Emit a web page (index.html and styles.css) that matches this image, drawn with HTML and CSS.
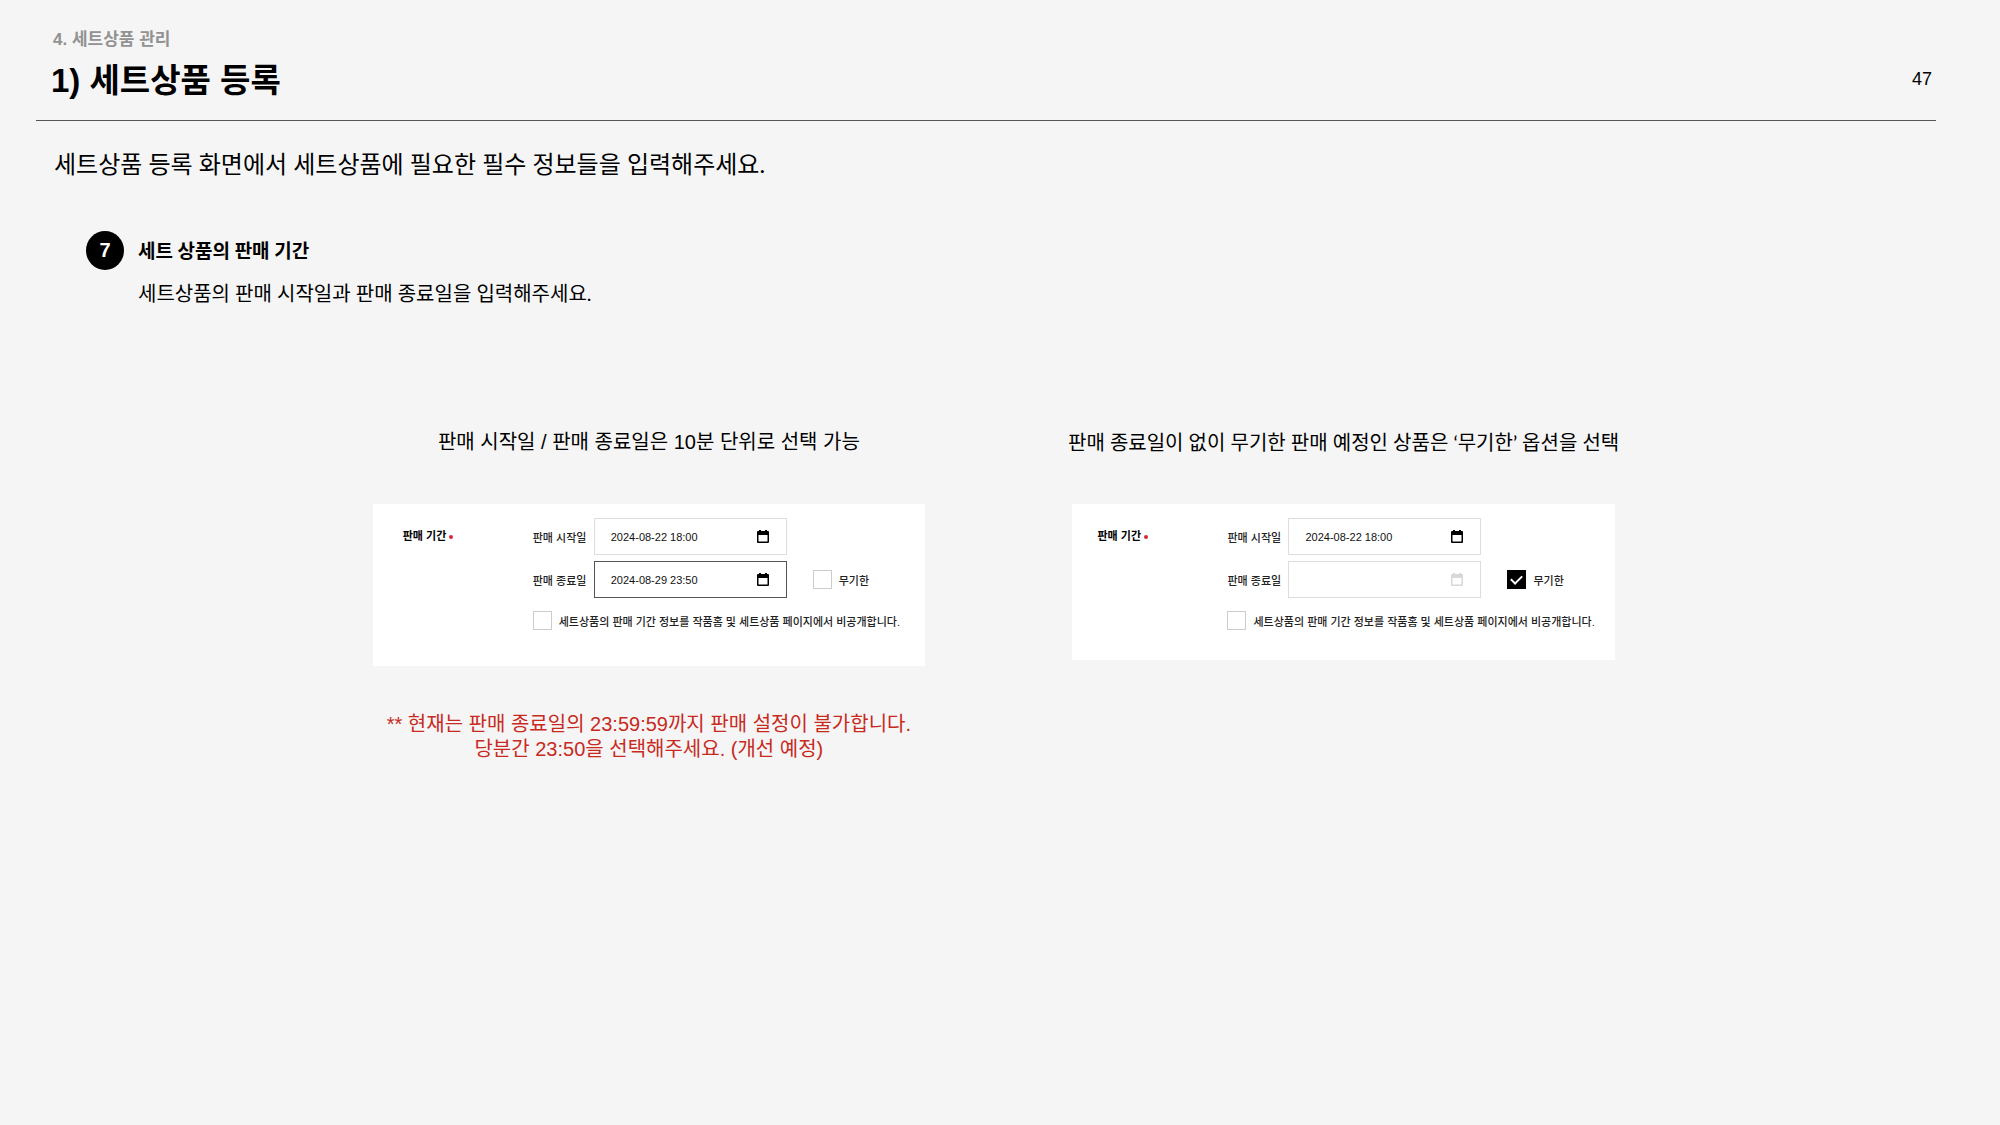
FILE: index.html
```html
<!DOCTYPE html>
<html lang="ko">
<head>
    <meta charset="UTF-8">
    <meta name="viewport" content="width=device-width, initial-scale=1.0">
    <title>세트상품 등록</title>
    <link rel="stylesheet" href="styles.css">
</head>
<body>
    <header class="header">
        <div>
            <p class="chapter">4. 세트상품 관리</p>
            <h1>1) 세트상품 등록</h1>
        </div>
        <span class="page-number">47</span>
    </header>

    <main>
        <p class="intro">세트상품 등록 화면에서 세트상품에 필요한 필수 정보들을 입력해주세요.</p>

        <section class="step">
            <span class="step-number">7</span>
            <h2>세트 상품의 판매 기간</h2>
            <p class="step-text">세트상품의 판매 시작일과 판매 종료일을 입력해주세요.</p>
        </section>

        <div class="examples">
            <section class="example">
                <p class="caption">판매 시작일 / 판매 종료일은 10분 단위로 선택 가능</p>
                <form class="card">
                    <h3>판매 기간 <span class="required"></span></h3>
                    <div class="fields">
                        <div class="row">
                            <label for="start1">판매 시작일</label>
                            <div class="date">
                                <input type="text" id="start1" value="2024-08-22 18:00">
                                <button type="button" aria-label="날짜 선택">
                                    <svg viewBox="0 0 12 13"><path fill-rule="evenodd" d="M2 0h2v1h4V0h2v1h1q1 0 1 1v10q0 1-1 1H1q-1 0-1-1V2q0-1 1-1h1zM1.500 5v6.500h9V5z"/></svg>
                                </button>
                            </div>
                        </div>
                        <div class="row">
                            <label for="end1">판매 종료일</label>
                            <div class="date active">
                                <input type="text" id="end1" value="2024-08-29 23:50">
                                <button type="button" aria-label="날짜 선택">
                                    <svg viewBox="0 0 12 13"><path fill-rule="evenodd" d="M2 0h2v1h4V0h2v1h1q1 0 1 1v10q0 1-1 1H1q-1 0-1-1V2q0-1 1-1h1zM1.500 5v6.500h9V5z"/></svg>
                                </button>
                            </div>
                            <label class="check no-end"><input type="checkbox"> 무기한</label>
                        </div>
                        <label class="check"><input type="checkbox"> 세트상품의 판매 기간 정보를 작품홈 및 세트상품 페이지에서 비공개합니다.</label>
                    </div>
                </form>
                <p class="notice">** 현재는 판매 종료일의 23:59:59까지 판매 설정이 불가합니다.<br>당분간 23:50을 선택해주세요. (개선 예정)</p>
            </section>

            <section class="example">
                <p class="caption plain">판매 종료일이 없이 무기한 판매 예정인 상품은 ‘무기한’ 옵션을 선택</p>
                <form class="card small">
                    <h3>판매 기간 <span class="required"></span></h3>
                    <div class="fields">
                        <div class="row">
                            <label for="start2">판매 시작일</label>
                            <div class="date">
                                <input type="text" id="start2" value="2024-08-22 18:00">
                                <button type="button" aria-label="날짜 선택">
                                    <svg viewBox="0 0 12 13"><path fill-rule="evenodd" d="M2 0h2v1h4V0h2v1h1q1 0 1 1v10q0 1-1 1H1q-1 0-1-1V2q0-1 1-1h1zM1.500 5v6.500h9V5z"/></svg>
                                </button>
                            </div>
                        </div>
                        <div class="row">
                            <label for="end2">판매 종료일</label>
                            <div class="date">
                                <input type="text" id="end2" disabled>
                                <button type="button" aria-label="날짜 선택" disabled>
                                    <svg viewBox="0 0 12 13"><path fill-rule="evenodd" d="M2 0h2v1h4V0h2v1h1q1 0 1 1v10q0 1-1 1H1q-1 0-1-1V2q0-1 1-1h1zM1.500 5v6.500h9V5z"/></svg>
                                </button>
                            </div>
                            <label class="check no-end"><input type="checkbox" checked> 무기한</label>
                        </div>
                        <label class="check"><input type="checkbox"> 세트상품의 판매 기간 정보를 작품홈 및 세트상품 페이지에서 비공개합니다.</label>
                    </div>
                </form>
            </section>
        </div>
    </main>
</body>
</html>
```
FILE: styles.css
```css
* {
    box-sizing: border-box;
}
body {
    margin: 0;
    background-color: #f5f5f5;
    color: #000;
    font-family: "Liberation Sans", "Noto Sans CJK KR", sans-serif;
    font-size: 20px;
}
h1, h2, h3, p {
    margin: 0;
}
.header {
    display: flex;
    justify-content: space-between;
    align-items: flex-end;
    margin: 0 64px 0 36px;
    padding: 27px 4px 12px 15px;
    border-bottom: 1px solid #555;
}
.chapter {
    padding-left: 2px;
    color: #929292;
    font-size: 17px;
    font-weight: bold;
    line-height: 26px;
}
h1 {
    font-size: 33px;
    line-height: 55px;
}
.page-number {
    font-size: 18px;
    line-height: 58px;
}
main {
    padding: 25px 62px 40px 54px;
}
.intro {
    font-family: Lato, "Noto Sans CJK KR", sans-serif;
    font-size: 24px;
    line-height: 36px;
}
.step {
    display: grid;
    grid-template-columns: 38px 1fr;
    column-gap: 14px;
    row-gap: 8px;
    align-items: center;
    margin-top: 49px;
    padding-left: 32px;
    font-family: Lato, "Noto Sans CJK KR", sans-serif;
}
.step-number {
    height: 39px;
    border-radius: 50%;
    background: #000;
    color: #fff;
    font-family: "Liberation Sans", sans-serif;
    font-weight: bold;
    line-height: 39px;
    text-align: center;
}
h2 {
    font-size: 19px;
    line-height: 30px;
}
.step-text {
    grid-column: 2;
    line-height: 30px;
}
.examples {
    display: flex;
    justify-content: center;
    gap: 143px;
    margin-top: 119px;
}
.example {
    display: flex;
    flex-direction: column;
    align-items: center;
}
.caption {
    line-height: 30px;
    white-space: nowrap;
}
.caption.plain {
    font-family: Lato, "Noto Sans CJK KR", sans-serif;
}
.card {
    display: flex;
    margin-top: 47px;
    padding: 14px 25px 36px 30px;
    background: #fff;
    color: #222;
    font-size: 11px;
    font-weight: 500;
}
.card.small {
    padding: 14px 20px 30px 25px;
}
h3 {
    width: 130px;
    color: #000;
    font-size: 11px;
    line-height: 37px;
}
.required {
    display: inline-block;
    width: 4px;
    height: 4px;
    border-radius: 50%;
    background: #d9263c;
    vertical-align: middle;
}
.fields {
    display: flex;
    flex-direction: column;
    gap: 6px;
}
.row {
    display: flex;
    align-items: center;
    gap: 7px;
}
.row label {
    min-width: 54px;
}
.date {
    display: flex;
    align-items: center;
    width: 193px;
    height: 37px;
    padding: 0 17px 0 16px;
    border: 1px solid #ddd;
}
.date.active {
    border-color: #555;
}
.date input {
    flex: 1;
    min-width: 0;
    padding: 0;
    border: none;
    outline: none;
    background: none;
    color: #111;
    font-family: inherit;
    font-size: 11px;
}
.date button {
    display: flex;
    padding: 0;
    border: none;
    background: none;
    cursor: pointer;
}
.date svg {
    width: 12px;
    height: 13px;
    fill: #000;
}
.date button:disabled svg {
    fill: #d8d8d8;
}
.check {
    display: flex;
    align-items: center;
    gap: 7px;
    margin-top: 7px;
    white-space: nowrap;
}
.check.no-end {
    margin: 0 0 0 19px;
}
.check input {
    appearance: none;
    display: flex;
    align-items: center;
    justify-content: center;
    width: 19px;
    height: 19px;
    margin: 0;
    border: 1px solid #ccc;
    background: #fff;
}
.check input:checked {
    border-color: #000;
    background: #000;
}
.check input:checked::before {
    content: "";
    width: 9px;
    height: 5px;
    margin-bottom: 3px;
    border: solid #fff;
    border-width: 0 0 2px 2px;
    transform: rotate(-45deg);
}
.notice {
    margin-top: 46px;
    color: #c82a1e;
    line-height: 25px;
    text-align: center;
    white-space: nowrap;
}
```
